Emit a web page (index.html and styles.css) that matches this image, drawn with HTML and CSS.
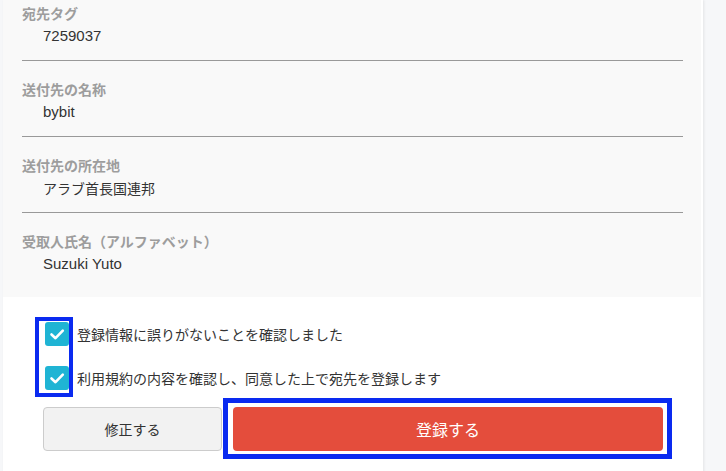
FILE: index.html
```html
<!DOCTYPE html>
<html lang="ja">
<head>
<meta charset="utf-8">
<link rel="stylesheet" href="styles.css">
</head>
<body>
<div class="card">
  <div class="info">
    <div class="item first">
      <div class="label">宛先タグ</div>
      <div class="value">7259037</div>
    </div>
    <div class="item">
      <div class="label">送付先の名称</div>
      <div class="value">bybit</div>
    </div>
    <div class="item">
      <div class="label">送付先の所在地</div>
      <div class="value ja">アラブ首長国連邦</div>
    </div>
    <div class="item last">
      <div class="label">受取人氏名（アルファベット）</div>
      <div class="value">Suzuki Yuto</div>
    </div>
  </div>
  <div class="confirm">
    <div class="checks">
      <label class="check-row">
        <span class="box"><svg viewBox="0 0 24 24" width="24" height="24"><path d="M6.5 12.5 L10.5 16.2 L17.8 8.6" fill="none" stroke="#fff" stroke-width="2.6" stroke-linecap="round" stroke-linejoin="round"/></svg></span>
        <span class="check-text">登録情報に誤りがないことを確認しました</span>
      </label>
      <label class="check-row">
        <span class="box"><svg viewBox="0 0 24 24" width="24" height="24"><path d="M6.5 12.5 L10.5 16.2 L17.8 8.6" fill="none" stroke="#fff" stroke-width="2.6" stroke-linecap="round" stroke-linejoin="round"/></svg></span>
        <span class="check-text">利用規約の内容を確認し、同意した上で宛先を登録します</span>
      </label>
      <div class="mark mark-checks"></div>
    </div>
    <div class="buttons">
      <button class="btn btn-edit">修正する</button>
      <div class="mark-frame">
        <button class="btn btn-submit">登録する</button>
      </div>
    </div>
  </div>
</div>
</body>
</html>
```
FILE: styles.css
```css
* { box-sizing: border-box; }
html, body { margin: 0; padding: 0; }
body {
  background: #f6f7f9;
  font-family: "Liberation Sans", "Noto Sans CJK JP", sans-serif;
  color: #333;
  height: 471px;
  overflow: hidden;
}
.card {
  margin-left: 3px;
  width: 700px;
  background: #fff;
  border-radius: 0 0 4px 4px;
  box-shadow: 1px 0 3px rgba(0,0,0,0.08);
  padding-bottom: 19px;
}
.info {
  background: #f9f9f9;
  margin-right: 2px;
  padding: 0 18px 0 19px;
  height: 297px;
}
.item {
  padding: 19px 0 10px;
  border-bottom: 1px solid #999;
}
.item.first { padding-top: 4px; }
.item.last { border-bottom: none; }
.label {
  font-family: "Noto Sans CJK JP", sans-serif;
  font-size: 14px;
  line-height: 18px;
  font-weight: 600;
  color: #9d9d9d;
}
.value {
  font-size: 15px;
  line-height: 28px;
  padding-left: 21px;
  color: #333;
}
.value.ja {
  font-family: "Noto Sans CJK JP", sans-serif;
  font-size: 14px;
}
.confirm {
  padding: 25px 40px 0;
}
.checks {
  position: relative;
  display: flex;
  flex-direction: column;
  gap: 20px;
}
.check-row {
  display: flex;
  align-items: center;
  gap: 8px;
  height: 24px;
  padding-left: 2px;
}
.box {
  width: 24px;
  height: 24px;
  border-radius: 3px;
  background: #1fb4d4;
  display: flex;
}
.check-text {
  font-family: "Noto Sans CJK JP", sans-serif;
  font-size: 14px;
  color: #333;
}
.mark {
  position: absolute;
  border: 4px solid #0a2af0;
}
.mark-checks {
  left: -8px;
  top: -5px;
  width: 38px;
  height: 80px;
}
.buttons {
  display: flex;
  align-items: center;
  gap: 1px;
  margin-top: 8px;
  margin-right: -9px;
}
.btn {
  height: 44px;
  border-radius: 4px;
  font-family: "Noto Sans CJK JP", sans-serif;
  cursor: pointer;
}
.btn-edit {
  flex: 0 0 179px;
  background: #f2f2f2;
  border: 1px solid #ccc;
  color: #333;
  font-size: 14px;
}
.mark-frame {
  flex: 1;
  display: flex;
  border: 5px solid #0a2af0;
  padding: 4px 4px 3px 5px;
}
.btn-submit {
  flex: 1;
  background: #e44d3c;
  border: none;
  color: #fff;
  font-size: 16px;
}
```
